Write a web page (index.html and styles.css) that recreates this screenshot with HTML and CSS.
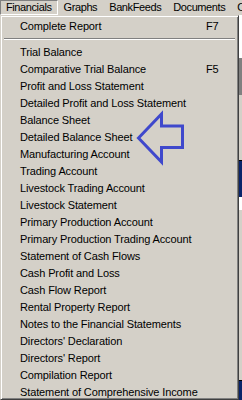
FILE: index.html
```html
<!DOCTYPE html>
<html>
<head>
<meta charset="utf-8">
<link rel="stylesheet" href="styles.css">
</head>
<body>
<div class="screen">
  <div class="menubar">
    <div class="mb-item active">Financials</div>
    <div class="mb-item">Graphs</div>
    <div class="mb-item">BankFeeds</div>
    <div class="mb-item">Documents</div>
    <div class="mb-item">Options</div>
  </div>
  <div class="main">
    <div class="dropdown">
      <div class="item"><span>Complete Report</span><span class="key">F7</span></div>
      <div class="sep"></div>
      <div class="item"><span>Trial Balance</span></div>
      <div class="item"><span>Comparative Trial Balance</span><span class="key">F5</span></div>
      <div class="item"><span>Profit and Loss Statement</span></div>
      <div class="item"><span>Detailed Profit and Loss Statement</span></div>
      <div class="item"><span>Balance Sheet</span></div>
      <div class="item"><span>Detailed Balance Sheet</span></div>
      <div class="item"><span>Manufacturing Account</span></div>
      <div class="item"><span>Trading Account</span></div>
      <div class="item"><span>Livestock Trading Account</span></div>
      <div class="item"><span>Livestock Statement</span></div>
      <div class="item"><span>Primary Production Account</span></div>
      <div class="item"><span>Primary Production Trading Account</span></div>
      <div class="item"><span>Statement of Cash Flows</span></div>
      <div class="item"><span>Cash Profit and Loss</span></div>
      <div class="item"><span>Cash Flow Report</span></div>
      <div class="item"><span>Rental Property Report</span></div>
      <div class="item"><span>Notes to the Financial Statements</span></div>
      <div class="item"><span>Directors' Declaration</span></div>
      <div class="item"><span>Directors' Report</span></div>
      <div class="item"><span>Compilation Report</span></div>
      <div class="item"><span>Statement of Comprehensive Income</span></div>
    </div>
    <div class="strip">
      <div class="seg s-white"></div>
      <div class="seg s-gray"></div>
      <div class="seg s-light"></div>
      <div class="seg s-black"></div>
      <div class="seg s-navy"></div>
      <div class="seg s-white2"></div>
      <div class="seg s-light2"></div>
      <div class="seg s-black"></div>
      <div class="seg s-navy2"></div>
    </div>
  </div>
  <svg class="arrow" width="242" height="400" viewBox="0 0 242 400">
    <polygon points="138.5,138 161.5,114 161.5,126 182.5,126 182.5,147.5 161.5,147.5 161.5,162 " />
  </svg>
</div>
</body>
</html>
```

FILE: styles.css
```css
html, body {
  margin: 0;
  padding: 0;
}
body {
  background: #d4d0c8;
  font-family: "Liberation Sans", Arial, sans-serif;
  font-size: 11px;
  letter-spacing: -0.12px;
  color: #000;
}
.screen {
  position: relative;
  width: 242px;
  height: 400px;
  overflow: hidden;
}
.menubar {
  display: flex;
  height: 15px;
  white-space: nowrap;
  overflow: hidden;
}
.mb-item {
  padding: 0 6px;
  line-height: 15px;
  height: 15px;
  flex: none;
  letter-spacing: -0.4px;
}
.mb-item.active {
  padding: 0 5px;
  line-height: 13px;
  height: 13px;
  border: 1px solid;
  border-color: #808080 #ffffff #ffffff #808080;
}
.main {
  display: flex;
  height: 385px;
}
.dropdown {
  width: 239px;
  box-sizing: border-box;
  border: 1px solid;
  border-color: #d4d0c8 #404040 #404040 #d4d0c8;
  box-shadow: inset 1px 1px 0 #ffffff, inset -1px -1px 0 #808080;
  padding: 2px 2px;
  flex: none;
}
.item {
  display: grid;
  grid-template-columns: 1fr 30px;
  padding-left: 17px;
  height: 17px;
  line-height: 17px;
  white-space: nowrap;
}
.sep {
  margin: 3px 1px 4px 1px;
  border-top: 1px solid #808080;
  border-bottom: 1px solid #ffffff;
}
.strip {
  width: 3px;
  display: flex;
  flex-direction: column;
}
.seg { flex: none; }
.s-white { height: 43px; background: #ffffff; }
.s-gray { height: 37px; background: #808080; }
.s-light { height: 65px; background: #d4d0c8; }
.s-black { height: 1px; background: #000000; }
.s-navy { height: 36px; background: #0a246a; }
.s-white2 { height: 13px; background: #ffffff; }
.s-light2 { height: 170px; background: #d4d0c8; }
.s-navy2 { height: 30px; background: #0a246a; }
.arrow {
  position: absolute;
  left: 0;
  top: 0;
  pointer-events: none;
}
.arrow polygon {
  fill: none;
  stroke: #3f48cc;
  stroke-width: 3;
  stroke-linejoin: miter;
}
```
